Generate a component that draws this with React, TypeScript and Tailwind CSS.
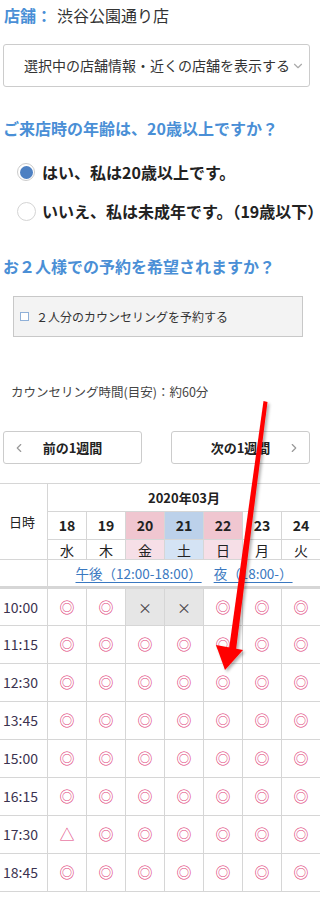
import { ChevronDown, ChevronLeft, ChevronRight } from 'lucide-react';

type Mark = 'o' | 'x' | 't';

const days = [
  { d: '18', w: '水', kind: '' },
  { d: '19', w: '木', kind: '' },
  { d: '20', w: '金', kind: 'holiday' },
  { d: '21', w: '土', kind: 'sat' },
  { d: '22', w: '日', kind: 'holiday' },
  { d: '23', w: '月', kind: '' },
  { d: '24', w: '火', kind: '' },
];

const slots: { time: string; marks: Mark[] }[] = [
  { time: '10:00', marks: ['o', 'o', 'x', 'x', 'o', 'o', 'o'] },
  { time: '11:15', marks: ['o', 'o', 'o', 'o', 'o', 'o', 'o'] },
  { time: '12:30', marks: ['o', 'o', 'o', 'o', 'o', 'o', 'o'] },
  { time: '13:45', marks: ['o', 'o', 'o', 'o', 'o', 'o', 'o'] },
  { time: '15:00', marks: ['o', 'o', 'o', 'o', 'o', 'o', 'o'] },
  { time: '16:15', marks: ['o', 'o', 'o', 'o', 'o', 'o', 'o'] },
  { time: '17:30', marks: ['t', 'o', 'o', 'o', 'o', 'o', 'o'] },
  { time: '18:45', marks: ['o', 'o', 'o', 'o', 'o', 'o', 'o'] },
];

function dayBg(kind: string) {
  if (kind === 'holiday') return 'bg-[#f0c6d0]';
  if (kind === 'sat') return 'bg-[#bcd1ea]';
  return 'bg-white';
}

function weekBg(kind: string) {
  if (kind === 'holiday') return 'bg-[#f6dfe7]';
  if (kind === 'sat') return 'bg-[#d4e3f4]';
  return 'bg-white';
}

function MarkCell({ mark }: { mark: Mark }) {
  if (mark === 'x') {
    return (
      <td className="h-[38px] border border-[#d6d6d6] bg-[#e6e6e6] text-center text-[14px] text-[#444]">×</td>
    );
  }
  return (
    <td className="h-[38px] border border-[#d6d6d6] text-center text-[15px] text-[#e0407a]">
      {mark === 'o' ? '◎' : '△'}
    </td>
  );
}

export default function App() {
  return (
    <div
      className="relative w-[320px] h-[898px] overflow-hidden bg-white text-[#222]"
      style={{ fontFamily: '"Noto Sans CJK JP", "Noto Sans", sans-serif' }}
    >
      <div className="px-[4px] pt-[3px] flex items-center h-[26px]">
        <span className="text-[16px] font-bold text-[#4a8fd6]">店舗：</span>
        <span className="ml-[5px] text-[16px] text-[#333]">渋谷公園通り店</span>
      </div>

      <div className="mx-[3px] mt-[18px] w-[307px] h-[43px] border border-[#ccc] rounded-[3px] flex items-center pl-[20px] pr-[6px]">
        <span className="text-[14px] text-[#333] whitespace-nowrap">選択中の店舗情報・近くの店舗を表示する</span>
        <ChevronDown className="w-[14px] h-[14px] text-[#aaa] ml-[1px] shrink-0" strokeWidth={2} />
      </div>

      <h2 className="mt-[29px] px-[3px] text-[16px] font-bold text-[#4a8fd6] leading-[24px] whitespace-nowrap">
        ご来店時の年齢は、20歳以上ですか？
      </h2>

      <div className="mt-[20px] flex items-center pl-[17px] h-[24px] whitespace-nowrap">
        <span className="w-[18px] h-[18px] rounded-full border border-[#ccc] bg-white flex items-center justify-center shrink-0">
          <span className="w-[13px] h-[13px] rounded-full bg-[#4d80c2]" />
        </span>
        <span className="ml-[7px] text-[16px] font-bold text-[#222]">はい、私は20歳以上です。</span>
      </div>

      <div className="mt-[15px] flex items-center pl-[17px] h-[24px] whitespace-nowrap">
        <span className="w-[19px] h-[19px] rounded-full border border-[#d4d4d4] bg-white shrink-0" />
        <span className="ml-[6px] text-[16px] font-bold text-[#222]">いいえ、私は未成年です。（19歳以下）</span>
      </div>

      <h2 className="mt-[31px] px-[3px] text-[16px] font-bold text-[#4a8fd6] leading-[24px] whitespace-nowrap">
        お２人様での予約を希望されますか？
      </h2>

      <div className="mt-[18px] ml-[13px] w-[290px] h-[41px] border border-[#c8c8c8] bg-[#f3f3f3] flex items-center pl-[6px]">
        <span className="w-[9px] h-[9px] border border-[#8fb0d8] bg-white shrink-0" />
        <span className="ml-[7px] text-[12px] text-[#333] whitespace-nowrap">２人分のカウンセリングを予約する</span>
      </div>

      <p className="mt-[46px] pl-[11px] text-[12.5px] text-[#444] leading-[18px] whitespace-nowrap">
        カウンセリング時間(目安)：約60分
      </p>

      <div className="mt-[30px] ml-[3px] w-[307px] flex justify-between">
        <button className="relative w-[139px] h-[33px] border border-[#ccc] rounded-[3px] bg-white flex items-center justify-center">
          <ChevronLeft className="absolute left-[8px] w-[14px] h-[14px] text-[#999]" strokeWidth={2} />
          <span className="text-[13px] font-bold text-[#222]">前の1週間</span>
        </button>
        <button className="relative w-[139px] h-[33px] border border-[#ccc] rounded-[3px] bg-white flex items-center justify-center">
          <span className="text-[13px] font-bold text-[#222]">次の1週間</span>
          <ChevronRight className="absolute right-[8px] w-[14px] h-[14px] text-[#999]" strokeWidth={2} />
        </button>
      </div>

      <table className="mt-[19px] ml-[-1px] w-[322px] table-fixed border-collapse">
        <colgroup>
          <col className="w-[48px]" />
          {days.map((d) => (
            <col key={d.d} className="w-[39px]" />
          ))}
        </colgroup>
        <thead>
          <tr>
            <th rowSpan={3} className="border border-[#d6d6d6] pl-[9px] text-left text-[13px] font-normal text-[#222]">
              日時
            </th>
            <th colSpan={7} className="h-[28px] border border-[#d6d6d6] text-[13px] font-bold text-[#222]">
              2020年03月
            </th>
          </tr>
          <tr>
            {days.map((d) => (
              <th
                key={d.d}
                className={`h-[28px] border border-[#d6d6d6] text-[14px] font-bold text-[#222] ${dayBg(d.kind)}`}
              >
                {d.d}
              </th>
            ))}
          </tr>
          <tr>
            {days.map((d) => (
              <th
                key={d.w}
                className={`h-[20px] border border-[#d6d6d6] text-[14px] font-normal leading-[18px] text-[#222] ${weekBg(d.kind)}`}
              >
                {d.w}
              </th>
            ))}
          </tr>
          <tr>
            <th className="h-[28px] border border-[#d6d6d6] border-b-[3px]" />
            <th colSpan={7} className="h-[28px] border border-[#d6d6d6] border-b-[3px] text-[13.5px] font-normal whitespace-nowrap">
              <span className="text-[#3a78c0] underline underline-offset-[3px]">午後（12:00-18:00）</span>
              <span className="ml-[12px] text-[#3a78c0] underline underline-offset-[3px]">夜（18:00-）</span>
            </th>
          </tr>
        </thead>
        <tbody>
          {slots.map((s) => (
            <tr key={s.time}>
              <td className="h-[38px] border border-[#d6d6d6] pl-[3px] text-[14px] text-[#3b3350]">{s.time}</td>
              {s.marks.map((m, i) => (
                <MarkCell key={i} mark={m} />
              ))}
            </tr>
          ))}
        </tbody>
      </table>

      {/* annotation arrow */}
      <svg className="pointer-events-none absolute left-0 top-0" width="320" height="898" viewBox="0 0 320 898">
        <defs>
          <filter id="sh" x="-50%" y="-10%" width="200%" height="120%">
            <feDropShadow dx="2" dy="2" stdDeviation="1.5" floodColor="#000" floodOpacity="0.3" />
          </filter>
        </defs>
        <g filter="url(#sh)">
          <polygon points="263.5,401 267.5,402 236,650 229,649" fill="#ff0000" />
          <polygon points="216,645 243,650 225,670" fill="#ff0000" />
        </g>
      </svg>
    </div>
  );
}
